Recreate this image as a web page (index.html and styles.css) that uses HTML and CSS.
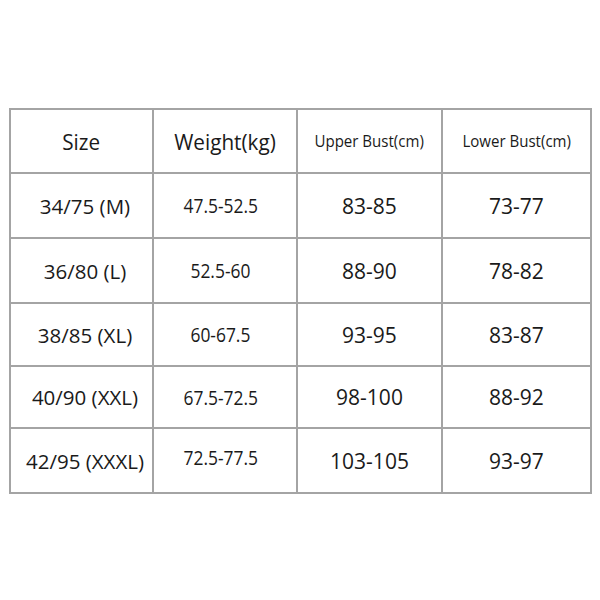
FILE: index.html
```html
<!DOCTYPE html>
<html>
<head>
<meta charset="utf-8">
<link rel="stylesheet" href="styles.css">
</head>
<body>
<div class="chart">
  <div class="cell head big"><span>Size</span></div>
  <div class="cell head big"><span>Weight(kg)</span></div>
  <div class="cell head small"><span>Upper Bust(cm)</span></div>
  <div class="cell head small"><span>Lower Bust(cm)</span></div>

  <div class="cell c1"><span>34/75 (M)</span></div>
  <div class="cell c2"><span>47.5-52.5</span></div>
  <div class="cell c3"><span>83-85</span></div>
  <div class="cell c4"><span>73-77</span></div>

  <div class="cell c1"><span>36/80 (L)</span></div>
  <div class="cell c2"><span>52.5-60</span></div>
  <div class="cell c3"><span>88-90</span></div>
  <div class="cell c4"><span>78-82</span></div>

  <div class="cell c1"><span>38/85 (XL)</span></div>
  <div class="cell c2"><span>60-67.5</span></div>
  <div class="cell c3"><span>93-95</span></div>
  <div class="cell c4"><span>83-87</span></div>

  <div class="cell c1"><span>40/90 (XXL)</span></div>
  <div class="cell c2"><span>67.5-72.5</span></div>
  <div class="cell c3"><span>98-100</span></div>
  <div class="cell c4"><span>88-92</span></div>

  <div class="cell c1"><span>42/95 (XXXL)</span></div>
  <div class="cell c2 raised"><span>72.5-77.5</span></div>
  <div class="cell c3"><span>103-105</span></div>
  <div class="cell c4"><span>93-97</span></div>
</div>
</body>
</html>
```
FILE: styles.css
```css
html, body {
  margin: 0;
  padding: 0;
  background: #ffffff;
}
body {
  padding-top: 108px;
  padding-left: 9px;
  font-family: "Open Sans", "Noto Sans", sans-serif;
  color: #1a1a1a;
}
.chart {
  display: grid;
  grid-template-columns: 143px 144px 145px 149px;
  grid-template-rows: 64px 65px 65px 63px 62px 65px;
  width: max-content;
  border-left: 2px solid #a4a4a4;
  border-top: 2px solid #a4a4a4;
}
.cell {
  border-right: 2px solid #a4a4a4;
  border-bottom: 2px solid #a4a4a4;
  display: flex;
  align-items: center;
  justify-content: center;
  font-size: 19px;
  white-space: nowrap;
}
.cell span {
  display: inline-block;
}
.head span {
  transform: scaleX(0.94);
}
.c1 {
  font-size: 20.5px;
  padding-left: 7px;
}
.c2 {
  font-size: 20px;
  padding-right: 9px;
}
.c2 span {
  transform: scaleX(0.87);
}
.c2.raised {
  padding-bottom: 6px;
}
.c3,
.c4 {
  font-size: 21px;
}
.head.big {
  font-size: 22px;
}
.head.small {
  font-size: 16px;
}
```
